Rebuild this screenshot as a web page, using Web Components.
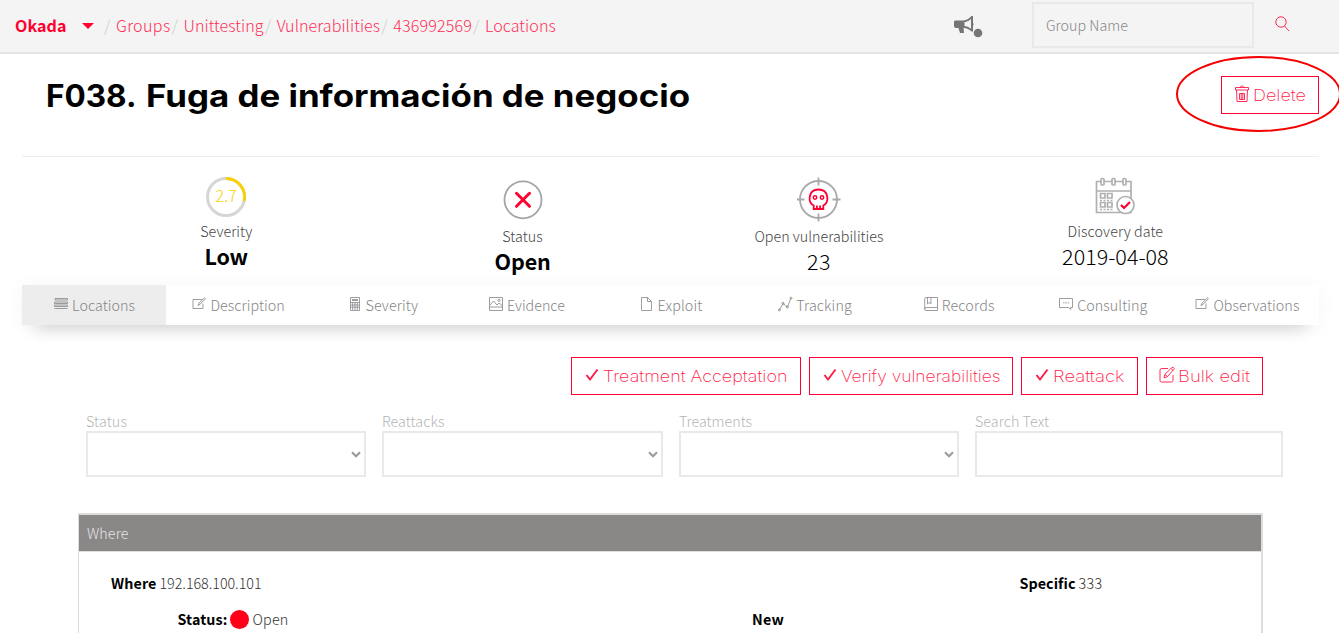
<!DOCTYPE html>
<html lang="es"><head><meta charset="utf-8"><title>Okada</title>
<style>
body{margin:0;width:1339px;height:633px;overflow:hidden;background:#fff;font-family:"Noto Sans CJK SC","Noto Sans",sans-serif;font-weight:300;font-size:14.3px;line-height:20px;color:#222}
</style></head><body>
<okada-app></okada-app>
<script>
const ICONS={
 list:'<path d="M1 1.500h12.500v1.500H1zM.5 5h13v1.500H.5zM.5 8h13v1.500H.5zM.5 11.500h13"/>',
 note:'<path d="M10 2.5H1v9h10V6.5M6 8.5l1-2.5L12.5.8l.9.8L8.5 7z"/>',
 calc:'<path d="M2.5.5h9v13h-9zM4 2.5h6M4 3.5h6M2.5 5.5h9M4.7 6v7M7 6v7M9.3 6v7M3 8h8M3 10.2h8"/>',
 image:'<path d="M.5.5h13v13H.5zM.5 10h13M1 8l3.5-4L8 8l2-2 3.3 2.5"/><circle cx="10" cy="3.3" r="1.1"/>',
 file:'<path d="M2.5.5h6l4 4v9h-10zM8.5.5v4h4"/>',
 graph:'<path d="M1.5 13L5 6.5l4.5 3.5L12.8 1.5"/><circle cx="1.4" cy="13" r="1"/><circle cx="5" cy="6.3" r="1"/><circle cx="9.3" cy="10" r="1"/><circle cx="13" cy="1.2" r="1"/>',
 book:'<path d="M2 .5h11.5v13H2C.2 13.5.2 10.500 2 10.500H13.500M.7 12V2Q.7.5 2 .5M3.500.5v6.500l1.700-1.500 1.700 1.500V.5"/>',
 chat:'<path d="M.5 1.500h13v9h-1.800v2l-2-2H.5zM4 5.800h1.500M6.300 5.800h1.500M8.600 5.800h1.500"/>',
 trash:'<path d="M5 1.500C5-.5 9-.5 9 1.500M.5 1.500h13v2.500H.5zM1.500 4l.5 11.500h10L12.500 4M4.500 7.500v6h5v-6zM6.200 7.500v6M7.800 7.500v6"/>',
 check:'<path stroke-width="1.900" d="M1.500 8l3.500 4.500L12.500 2.500"/>',
 edit:'<path d="M8 1.500H1.500Q0 1.500 0 3v10.500q0 1.500 1.500 1.500h10q1.500 0 1.500-1.500V8M4 11l.8-3.500L12 .3q1.400-.6 2.400 1.500L7.500 9.500zM4.800 7.500l2.700 2M11 1.500l2.200 2"/>',
};
function comp(name,fn){customElements.define(name,class extends HTMLElement{connectedCallback(){if(this.shadowRoot)return;this.attachShadow({mode:'open'}).innerHTML=fn(this)}})}
const A=(e,n,d='')=>e.getAttribute(n)??d;

comp('line-icon',e=>`<style>:host{display:block;flex:none;width:14px}svg{display:block;fill:none;stroke:currentColor;stroke-width:${A(e,'weight','.8')};overflow:visible}</style><svg width="14" height="${A(e,'h','14')}" viewBox="0 0 14 ${A(e,'h','14')}">${ICONS[A(e,'name')]}</svg>`);

comp('crumb-link',e=>`<style>:host{display:flex;color:#ff2f55}i{font-style:normal;color:#ccc;width:13px;padding-left:1px;box-sizing:border-box}</style><i>/</i><fit-text w="${A(e,'w')}"><slot></slot></fit-text>`);

comp('top-bar',e=>`<style>
:host{display:flex;height:52px;background:#f4f4f4;border-bottom:2px solid #e4e4e4;font-size:16.100px;line-height:50px;box-sizing:content-box}
.brand{color:#ff0030;font-weight:700;padding-left:15px;width:51.500px}
.caret{align-self:center;margin:0 9px 0 15.500px}nav{display:flex;width:850px}
.ann{align-self:center}
.box{box-sizing:border-box;width:222px;height:46px;border:2px solid #e9e9e9;margin:2px 0 0 49px;padding-left:12px;line-height:42px;font-size:14.300px;color:#888}
.search{margin:16px 0 0 20px}
</style><fit-text class="brand" w="51.500">Okada</fit-text><svg class="caret" width="12" height="6"><path d="M0 0h12L6 6z" fill="#ff0030"/></svg>
<nav><crumb-link w="54.500">Groups</crumb-link><crumb-link w="80.200">Unittesting</crumb-link><crumb-link w="103.500">Vulnerabilities</crumb-link><crumb-link w="78.700">436992569</crumb-link><crumb-link w="71">Locations</crumb-link></nav>
<svg class="ann" width="30" height="24" viewBox="0 0 30 24" fill="#757575"><path fill-rule="evenodd" d="M2 6.500h8q5-.5 8.500-4.500h1.500v7q1.500 1 0 2.500v6h-1.500Q15 14 10.500 14l.5 5H7l-1.500-5H3q-2 0-2-2V8q0-1.500 1-1.500zM11.500 8.300v3.800q3.500.3 6.500 2.700V5q-3 3-6.500 3.300z"/><circle cx="25" cy="19" r="4.300"/></svg>
<div class="box">Group Name</div>
<svg class="search" width="16" height="16" fill="none" stroke="#ff2950"><circle cx="7" cy="6" r="5.200"/><path d="M10.500 10l4.500 5"/></svg>`);

comp('action-button',e=>`<style>:host{display:flex;box-sizing:border-box;width:${A(e,'width')}px;height:38px;border:1px solid #ff0030;color:#ff1a48;padding-left:13px;align-items:center;font:200 16.300px/36px Inter,sans-serif;background:#fff}line-icon{margin:-2px ${A(e,'gap','4')}px 0 0}</style><line-icon h="16" name="${A(e,'icon')}" weight=".9"></line-icon><fit-text mode="stretch" w="${A(e,'w')}"><slot></slot></fit-text>`);

comp('finding-header',e=>`<style>:host{display:flex;position:relative;justify-content:space-between;height:102px;margin:0 20px 0 22px;border-bottom:1px solid #eee}h1{display:flex;gap:9px;margin:22.500px 0 0 24px;font:700 31px/38px Inter,sans-serif;color:#000}action-button{margin-top:22px}.mark{position:absolute;left:1152px;top:0;overflow:visible}</style><h1><fit-text mode="stretch" w="90.500">F038.</fit-text> <fit-text mode="stretch" w="544">Fuga de información de negocio</fit-text></h1><action-button icon="trash" width="98" w="53">Delete</action-button><svg class="mark" width="166" height="80" fill="none" stroke="#f40000" stroke-width="2"><ellipse cx="84.500" cy="40" rx="81.500" ry="37"/></svg>`);

comp('stat-item',e=>`<style>:host{display:flex;flex-direction:column;align-items:center;padding-top:20px}.pic{height:${A(e,'h')}px}.l{color:#444;height:20px}.v{font-size:21.500px;line-height:30px;color:#000;font-weight:${A(e,'bold')?700:300}}</style><div class="pic"><slot></slot></div><fit-text class="l" w="${A(e,'lw')}">${A(e,'label')}</fit-text><fit-text class="v" w="${A(e,'vw')}">${A(e,'value')}</fit-text>`);

comp('severity-gauge',e=>`<style>:host{display:grid;width:40px;height:40px;place-items:center;color:#f8d200;font-size:16.100px;line-height:20px}svg,span{grid-area:1/1}span{margin-top:-5px}</style><svg width="40" height="40" fill="none" stroke-width="3"><circle cx="20" cy="20" r="18.500" stroke="#d6d6d6"/><path d="M20 1.500A18.500 18.500 0 0 1 38.200 24" stroke="#f8d200"/></svg><span>2.7</span>`);

comp('stat-row',e=>`<style>:host{display:grid;grid-template-columns:repeat(4,296.400px);margin-left:78px;height:128px}svg{display:block}</style>
<stat-item label="Severity" value="Low" lw="52" vw="43.500" bold="1" h="44"><severity-gauge></severity-gauge></stat-item>
<stat-item label="Status" value="Open" lw="40.500" vw="56" bold="1" h="49"><svg width="40" height="46" fill="none"><circle cx="20" cy="22.800" r="18.500" stroke="#a5a5a5" stroke-width="1.800"/><path d="M13.500 16.300l13 13M26.500 16.300l-13 13" stroke="#ff0030" stroke-width="3" stroke-linecap="round"/></svg></stat-item>
<stat-item label="Open vulnerabilities" value="23" lw="129" vw="24" h="49"><svg width="44" height="46" fill="none" stroke="#a9a9a9" stroke-width="1.800"><circle cx="21.500" cy="22.500" r="18.500"/><path d="M21.500 .5v8M21.500 36.500v8M-.5 22.500h8M35.500 22.500h8"/><g transform="translate(-.5)"><path stroke="#ff0030" d="M17.200 28.500c-6.200-2-6-16 4.800-16s11 14 4.800 16v3.500h-9.600zM20.400 28.500v3M23.600 28.500v3"/><circle cx="18.500" cy="20.500" r="1.700" stroke="#ff0030" stroke-width="1.500"/><circle cx="25.500" cy="20.500" r="1.700" stroke="#ff0030" stroke-width="1.500"/></g></svg></stat-item>
<stat-item label="Discovery date" value="2019-04-08" lw="95.500" vw="106.500" h="44"><svg width="40" height="40" fill="none" stroke="#b0b0b0" stroke-width="1.700"><path d="M1.500 4.500h34.500v31H1.500zM1.500 14h34.500"/><g fill="#fff"><rect x="6" y="1.500" width="3" height="6.500" rx="1"/><rect x="17" y="1.500" width="3" height="6.500" rx="1"/><rect x="28" y="1.500" width="3" height="6.500" rx="1"/></g><path d="M5.500 16.500h4.500v4.500H5.500zM12.500 16.500H17v4.500h-4.500zM5.500 25.500h4.500v4.500H5.500zM12.500 25.500H17v4.500h-4.500z"/><path stroke-dasharray="2 1.500" d="M5 23.500h13M5 32.500h13"/><circle cx="30.500" cy="28" r="8.500" fill="#fff"/><path stroke="#ff0030" stroke-width="2.200" d="M26 28l3 3 6-6"/></svg></stat-item>`);

comp('tab-item',e=>`<style>:host{display:flex;flex:1;justify-content:center;align-items:center;gap:4px;padding-left:1px;color:#858585;background:${A(e,'on')?'#ededed':'#fff'}}line-icon{margin-top:-2px}</style><line-icon name="${A(e,'icon')}"></line-icon><fit-text w="${A(e,'w')}"><slot></slot></fit-text>`);
comp('tab-bar',e=>`<style>:host{display:flex;height:40px;margin:0 20px 0 22px;box-shadow:0 15px 18px -14px rgba(0,0,0,.24),0 2px 20px rgba(0,0,0,.045)}</style><tab-item on="1" icon="list" w="63">Locations</tab-item><tab-item icon="note" w="74.500">Description</tab-item><tab-item icon="calc" w="52.500">Severity</tab-item><tab-item icon="image" w="58">Evidence</tab-item><tab-item icon="file" w="45">Exploit</tab-item><tab-item icon="graph" w="55.500">Tracking</tab-item><tab-item icon="book" w="53">Records</tab-item><tab-item icon="chat" w="70">Consulting</tab-item><tab-item icon="note" w="86">Observations</tab-item>`);

comp('filter-field',e=>`<style>:host{display:block;color:#b5b5b5}label{display:block;height:19px;line-height:18px}.b{box-sizing:border-box;height:46px;border:2px solid #e9e9e9;display:flex;align-items:center;justify-content:flex-end;padding-right:3.500px}</style><label><fit-text w="${A(e,'w')}">${A(e,'label')}</fit-text></label><div class="b">${A(e,'select')?'<svg width="10" height="7" fill="none" stroke="#999" stroke-width="2"><path d="M1 1.300l4 4 4-4"/></svg>':''}</div>`);

comp('vuln-table',e=>`<style>:host{display:block;box-sizing:border-box;width:1185px;height:140px;margin:36px 0 0 78px;border:1px solid #ddd;border-top-width:2px;border-right-width:2px;color:#333}.h{height:36px;line-height:36px;background:#8a8787;color:#e6e6e6;padding-left:8px;border-bottom:1px solid #ddd}b{font-weight:700;color:#000}.r{display:flex;height:36px;line-height:36px;align-items:center;gap:3px}.one{padding:13px 0 0 32px}.two{padding-left:98.500px}.sp{margin-left:auto;padding-right:158.500px;display:flex;gap:3px}.dot{width:19px;height:19px;border-radius:50%;background:#ff0018;margin:0 .5px 0 -.5px}.new{margin-left:460.500px}</style>
<div class="h"><fit-text w="41.500">Where</fit-text></div>
<div class="r one"><b><fit-text w="45.500">Where</fit-text></b><fit-text w="102">192.168.100.101</fit-text><div class="sp"><b><fit-text w="56">Specific</fit-text></b><fit-text w="24">333</fit-text></div></div>
<div class="r two"><b><fit-text w="50">Status:</fit-text></b><span class="dot"></span><fit-text w="36">Open</fit-text><b class="new"><fit-text w="32">New</fit-text></b></div>`);

comp('okada-app',e=>`<style>:host{display:block}.acts{display:flex;gap:8px;margin:32px 0 0 571px}.filters{display:grid;grid-template-columns:280px 281px 280px 308px;column-gap:16px;margin:17px 0 0 86px}</style>
<top-bar></top-bar><finding-header></finding-header><stat-row></stat-row><tab-bar></tab-bar>
<div class="acts"><action-button icon="check" width="230" w="184.500">Treatment Acceptation</action-button><action-button icon="check" width="204" w="159.500">Verify vulnerabilities</action-button><action-button icon="check" width="117" w="71.500">Reattack</action-button><action-button icon="edit" width="117" w="72">Bulk edit</action-button></div>
<div class="filters"><filter-field label="Status" w="41" select="1"></filter-field><filter-field label="Reattacks" w="62.500" select="1"></filter-field><filter-field label="Treatments" w="73" select="1"></filter-field><filter-field label="Search Text" w="74"></filter-field></div>
<vuln-table></vuln-table>`);

/* Sets a run of text to a given width, by tracking or by horizontal stretch. */
customElements.define('fit-text',class extends HTMLElement{connectedCallback(){
 if(this.shadowRoot)return;
 const w=parseFloat(this.getAttribute('w'));
 this.attachShadow({mode:'open'}).innerHTML=`<style>:host{display:block;flex:none;width:${w}px;white-space:nowrap}span{display:inline-block;transform-origin:0 50%}</style><span><slot></slot></span>`;
 const s=this.shadowRoot.querySelector('span'),n=s.getBoundingClientRect().width;
 let t=this.textContent;
 if(!t.trim())t=this.getRootNode().host.textContent;
 if(!n)return;
 if(this.getAttribute('mode')==='stretch')s.style.transform=`scaleX(${w/n})`;
 else s.style.letterSpacing=(w-n)/t.trim().length+'px';
}});
</script></body></html>
